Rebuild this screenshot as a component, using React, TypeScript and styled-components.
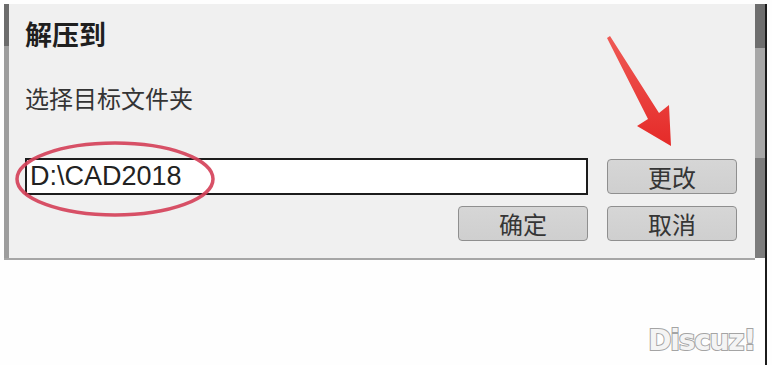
import React from "react";
import styled, { createGlobalStyle } from "styled-components";

const Global = createGlobalStyle`
  html, body { margin: 0; padding: 0; background: #fefefe; }
  * { box-sizing: border-box; }
`;

const CJK = `"Noto Sans CJK SC", "Noto Sans", sans-serif`;

const Frame = styled.div`
  position: relative;
  width: 772px;
  height: 365px;
  display: flex;
  padding: 4px 5px 0 4px;
  background: #fefefe;
  overflow: hidden;
`;

const Main = styled.div`
  flex: 1;
  display: flex;
  flex-direction: column;
  min-width: 0;
`;

const Dialog = styled.section`
  height: 256px;
  padding: 14px 18px 17px 21px;
  border-bottom: 2px solid #a6a6a6;
  background:
    linear-gradient(to bottom, #6c6c6c 0 42px, #9d9d9d 42px 100%) left top / 5px 254px no-repeat,
    #f0f0f0;
  display: flex;
  flex-direction: column;
`;

const Title = styled.h1`
  margin: 0;
  font-family: ${CJK};
  font-size: 27px;
  line-height: 32px;
  font-weight: 700;
  color: #1f1f1f;
`;

const Label = styled.p`
  margin: 33px 0 0;
  font-family: ${CJK};
  font-size: 24px;
  line-height: 30px;
  font-weight: 400;
  color: #343434;
`;

const Form = styled.div`
  margin-top: 45px;
  display: grid;
  grid-template-columns: 1fr 130px;
  grid-template-rows: 37px 35px;
  column-gap: 19px;
  row-gap: 11px;
  align-items: center;
`;

const PathField = styled.div`
  height: 37px;
  border: 2px solid #1c1c1c;
  background: #ffffff;
  padding-left: 3px;
  font-family: "Liberation Sans", Arial, sans-serif;
  font-size: 27px;
  line-height: 33px;
  color: #222;
  white-space: nowrap;
`;

const Button = styled.button<{ $alignEnd?: boolean }>`
  width: 130px;
  height: 35px;
  justify-self: ${(p) => (p.$alignEnd ? "end" : "start")};
  padding: 0;
  border: 1px solid #8f8f8f;
  border-radius: 4px;
  background: linear-gradient(to bottom, #d6d6d6, #cfcfcf);
  font-family: ${CJK};
  font-size: 24px;
  line-height: 33px;
  color: #353535;
`;

const Footer = styled.div`
  flex: 1;
  display: flex;
  justify-content: flex-end;
  align-items: flex-end;
  padding-bottom: 9px;
`;

const Watermark = styled.span`
  font-family: "DejaVu Sans", "Liberation Sans", sans-serif;
  font-weight: 700;
  font-size: 28px;
  line-height: 30px;
  letter-spacing: -1.2px;
  color: #f4f4f4;
  -webkit-text-stroke: 2px #a4a4a4;
  paint-order: stroke fill;
`;

const Rail = styled.div`
  width: 12px;
  border-right: 2px solid #1b1b1b;
`;

const Track = styled.div`
  height: 254px;
  background: linear-gradient(
    to bottom,
    #6e6e6e 0 44px,
    #a7a7a7 44px 154px,
    #7c7c7c 154px 100%
  );
`;

const Annotations = styled.svg`
  position: absolute;
  left: 0;
  top: 0;
  pointer-events: none;
`;

export default function App() {
  return (
    <>
      <Global />
      <Frame>
        <Main>
          <Dialog>
            <Title>解压到</Title>
            <Label>选择目标文件夹</Label>
            <Form>
              <PathField>D:\CAD2018</PathField>
              <Button>更改</Button>
              <Button $alignEnd>确定</Button>
              <Button>取消</Button>
            </Form>
          </Dialog>
          <Footer>
            <Watermark>Discuz!</Watermark>
          </Footer>
        </Main>
        <Rail>
          <Track />
        </Rail>
        <Annotations width="772" height="365" viewBox="0 0 772 365">
          <defs>
            <linearGradient id="arrowGrad" x1="0" y1="0" x2="0" y2="1">
              <stop offset="0" stopColor="#ef5a55" />
              <stop offset="1" stopColor="#e52a28" />
            </linearGradient>
          </defs>
          <ellipse
            cx="115"
            cy="179"
            rx="98"
            ry="36"
            fill="none"
            stroke="#d5425a"
            strokeWidth="3.5"
            opacity="0.92"
          />
          <polygon
            points="607,38 610,36 659,113 669,105 671,146 637,126 648,119"
            fill="url(#arrowGrad)"
          />
        </Annotations>
      </Frame>
    </>
  );
}
